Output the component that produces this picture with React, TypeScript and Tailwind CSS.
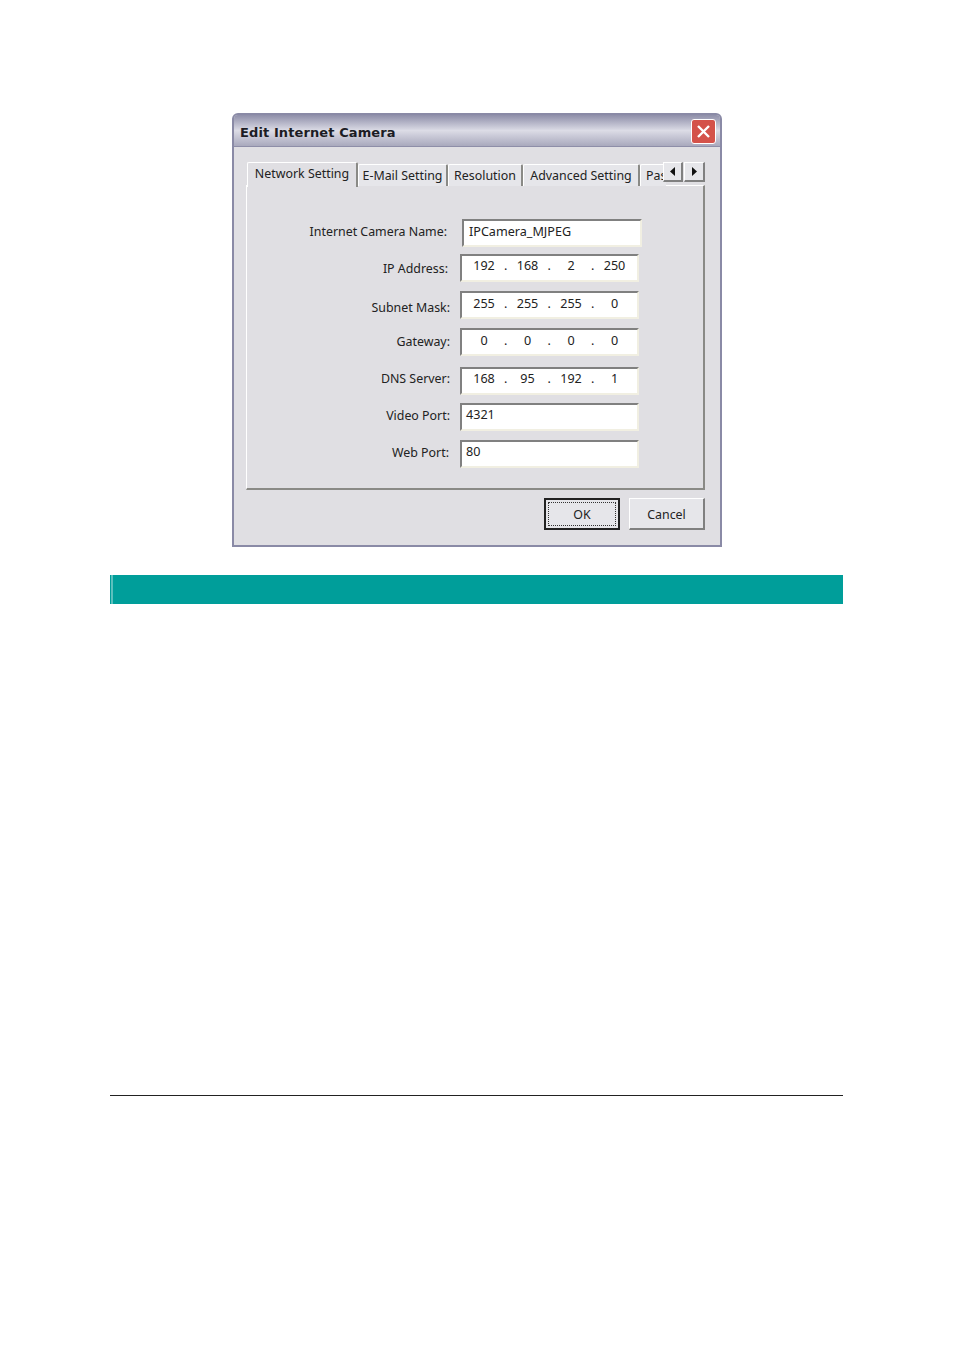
import React from 'react';

const font = "font-['Noto_Sans',sans-serif]";

const Field: React.FC<{ className: string; children: React.ReactNode }> = ({ className, children }) => (
  <div className={`h-[28px] bg-white border-2 border-t-[#808080] border-l-[#808080] border-r-[#f1efe2] border-b-[#f1efe2] text-[12.6px] leading-[18px] text-[#222] ${className}`}>
    {children}
  </div>
);

const IpField: React.FC<{ parts: string[]; className: string }> = ({ parts, className }) => (
  <Field className={`w-[179px] flex pl-[4px] ${className}`}>
    {parts.map((p, i) => (
      <React.Fragment key={i}>
        <span className="w-[36px] text-center">{p}</span>
        {i < 3 && <span className="w-[7.5px] text-center">.</span>}
      </React.Fragment>
    ))}
  </Field>
);

const Row: React.FC<{ label: string; className: string; labelClass: string; children: React.ReactNode }> = ({ label, className, labelClass, children }) => (
  <div className={`flex ${className}`}>
    <div className={`text-right text-[12.4px] leading-[18px] text-[#222] whitespace-nowrap ${labelClass}`}>{label}</div>
    {children}
  </div>
);

const Tab: React.FC<{ label: string; className: string }> = ({ label, className }) => (
  <div className={`h-[22px] bg-[#e6e6ea] border-t border-l border-white border-r-2 border-r-[#8a8a86] rounded-t-[2px] text-[12.4px] leading-[22px] text-[#222] text-center whitespace-nowrap overflow-hidden ${className}`}>
    {label}
  </div>
);

const App: React.FC = () => {
  return (
    <div className={`w-[954px] h-[1351px] bg-white overflow-hidden pt-[113px] ${font}`}>
      {/* dialog */}
      <div className="ml-[232px] w-[490px] h-[434px] bg-[#e0dfe3] border-2 border-[#8a8aa6] rounded-t-[6px] flex flex-col">
        <div className="h-[32px] shrink-0 flex items-center justify-between pl-[6px] pr-[4px] rounded-t-[4px] border-b border-[#8e8ea8] bg-gradient-to-b from-[#8f8fa9] via-[#dcdce6] to-[#a9a9bd]">
          <span className="font-['DejaVu_Sans',sans-serif] font-bold text-[13px] leading-[18px] mt-[5px] text-[#1c1c24] tracking-[0.1px] whitespace-nowrap">Edit Internet Camera</span>
          <div className="w-[25px] h-[25px] mt-[1px] rounded-[3px] border border-white bg-[#d4524a] flex items-center justify-center">
            <svg width="15" height="15" viewBox="0 0 15 15">
              <path d="M2 2L13 13M13 2L2 13" stroke="#fff" strokeWidth="2.4" />
            </svg>
          </div>
        </div>

        <div className="relative pl-[12px] pt-[15px]">
          {/* tab strip */}
          <div className="flex items-end h-[24px] pl-[1px] relative z-10 mb-[-1px]">
            <div className="h-[25px] w-[111px] mb-[-1px] bg-[#e0dfe3] border-t border-l border-white border-r-2 border-r-[#8a8a86] rounded-t-[2px] text-[12.4px] leading-[22px] text-[#222] text-center whitespace-nowrap">
              Network Setting
            </div>
            <Tab label="E-Mail Setting" className="w-[90px]" />
            <Tab label="Resolution" className="w-[75px]" />
            <Tab label="Advanced Setting" className="w-[117px]" />
            <Tab label="Password" className="w-[26px] !text-left pl-[5px] !border-r-0" />
          </div>

          {/* tab scroll buttons */}
          <div className="absolute z-20 left-[429px] top-[15px] flex gap-[1px]">
            <div className="w-[20px] h-[20px] bg-[#e6e6ea] border-r-2 border-b-2 border-r-[#808080] border-b-[#808080] border-t border-l border-t-white border-l-white flex items-center justify-center">
              <svg width="6" height="9" viewBox="0 0 6 9"><path d="M5 0L0 4.5L5 9Z" fill="#111" /></svg>
            </div>
            <div className="w-[21px] h-[20px] bg-[#e6e6ea] border-r-2 border-b-2 border-r-[#808080] border-b-[#808080] border-t border-l border-t-white border-l-white flex items-center justify-center">
              <svg width="6" height="9" viewBox="0 0 6 9"><path d="M1 0L6 4.5L1 9Z" fill="#111" /></svg>
            </div>
          </div>

          {/* panel */}
          <div className="w-[459px] h-[305px] border-t border-l border-white border-r-2 border-b-2 border-r-[#8a8a86] border-b-[#8a8a86] pt-[33px]">
            <Row label="Internet Camera Name:" className="" labelClass="w-[200px] mr-[15px] pt-[4px]">
              <Field className="w-[180px] pl-[5px] pt-[2px]">IPCamera_MJPEG</Field>
            </Row>
            <Row label="IP Address:" className="mt-[7px]" labelClass="w-[201px] mr-[12px] pt-[6px]">
              <IpField parts={['192', '168', '2', '250']} className="pt-[1px]" />
            </Row>
            <Row label="Subnet Mask:" className="mt-[9px]" labelClass="w-[203px] mr-[10px] pt-[8px]">
              <IpField parts={['255', '255', '255', '0']} className="pt-[2px]" />
            </Row>
            <Row label="Gateway:" className="mt-[9px]" labelClass="w-[203px] mr-[10px] pt-[5px]">
              <IpField parts={['0', '0', '0', '0']} className="pt-[2px]" />
            </Row>
            <Row label="DNS Server:" className="mt-[11px]" labelClass="w-[203px] mr-[10px] pt-[3px]">
              <IpField parts={['168', '95', '192', '1']} className="pt-[1px]" />
            </Row>
            <Row label="Video Port:" className="mt-[8px]" labelClass="w-[203px] mr-[10px] pt-[4px]">
              <Field className="w-[179px] pl-[4px] pt-[1px]">4321</Field>
            </Row>
            <Row label="Web Port:" className="mt-[9px]" labelClass="w-[202px] mr-[11px] pt-[4px]">
              <Field className="w-[179px] pl-[4px] pt-[1px]">80</Field>
            </Row>
          </div>

          {/* buttons */}
          <div className="flex justify-end gap-[9px] w-[459px] mt-[8px]">
            <div className="w-[76px] h-[32px] bg-[#e6e6ea] border-2 border-[#222] p-[2px]">
              <div className="h-full border border-dotted border-[#333] text-center text-[12.4px] leading-[24px] text-[#222]">OK</div>
            </div>
            <div className="w-[76px] h-[32px] bg-[#e6e6ea] border-t border-l border-white border-r-2 border-b-2 border-r-[#808080] border-b-[#808080] text-center text-[12.4px] leading-[31px] text-[#222]">
              Cancel
            </div>
          </div>
        </div>
      </div>

      {/* teal section bar */}
      <div className="ml-[110px] mt-[28px] w-[733px] h-[29px] bg-[#009e9a] flex">
        <div className="w-[1px] bg-[#009e9a]" />
        <div className="w-[2px] bg-[#5cc0bd]" />
      </div>

      {/* footer rule */}
      <div className="ml-[110px] mt-[491px] w-[733px] h-[1px] bg-[#222]" />
    </div>
  );
};

export default App;
